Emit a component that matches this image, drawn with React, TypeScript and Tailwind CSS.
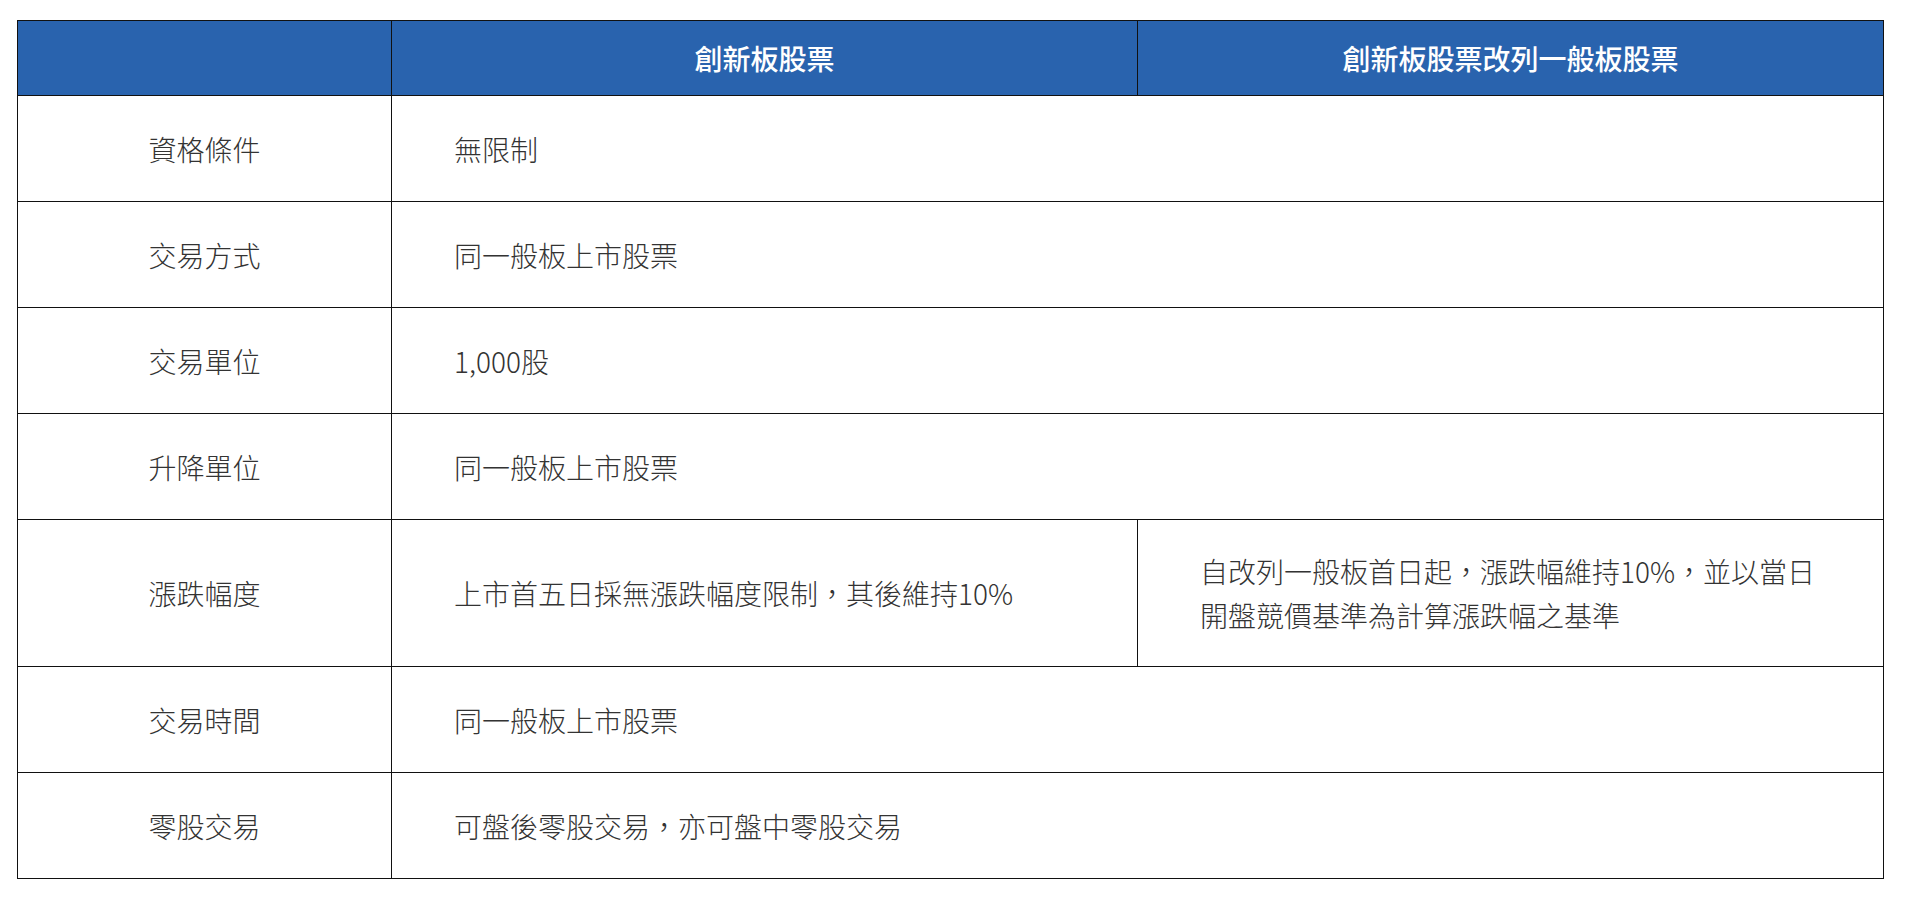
const rows: Array<{ label: string; value: string; second?: string }> = [
  { label: "資格條件", value: "無限制" },
  { label: "交易方式", value: "同一般板上市股票" },
  { label: "交易單位", value: "1,000股" },
  { label: "升降單位", value: "同一般板上市股票" },
  {
    label: "漲跌幅度",
    value: "上市首五日採無漲跌幅度限制，其後維持10%",
    second: "自改列一般板首日起，漲跌幅維持10%，並以當日開盤競價基準為計算漲跌幅之基準",
  },
  { label: "交易時間", value: "同一般板上市股票" },
  { label: "零股交易", value: "可盤後零股交易，亦可盤中零股交易" },
];

export default function App() {
  return (
    <div className="min-h-[906px] bg-white pt-[20px] pl-[17px] font-['Noto_Sans_CJK_TC','Noto_Sans',sans-serif]">
      <table className="w-[1866px] table-fixed border-collapse border border-[#111] text-[28px] leading-[44px] text-[#333]">
        <colgroup>
          <col className="w-[374px]" />
          <col className="w-[746px]" />
          <col className="w-[746px]" />
        </colgroup>
        <thead>
          <tr className="h-[75px] bg-[#2963ae] text-white">
            <th className="border border-[#111]"></th>
            <th className="border border-[#111] font-medium">創新板股票</th>
            <th className="border border-[#111] font-medium">創新板股票改列一般板股票</th>
          </tr>
        </thead>
        <tbody className="font-light">
          {rows.map((row) => (
            <tr key={row.label} className={row.second ? "h-[147px]" : "h-[106px]"}>
              <td className="border border-[#111] text-center">{row.label}</td>
              {row.second ? (
                <>
                  <td className="border border-[#111] px-[62px]">{row.value}</td>
                  <td className="border border-[#111] px-[62px]">{row.second}</td>
                </>
              ) : (
                <td colSpan={2} className="border border-[#111] px-[62px]">
                  {row.value}
                </td>
              )}
            </tr>
          ))}
        </tbody>
      </table>
    </div>
  );
}
